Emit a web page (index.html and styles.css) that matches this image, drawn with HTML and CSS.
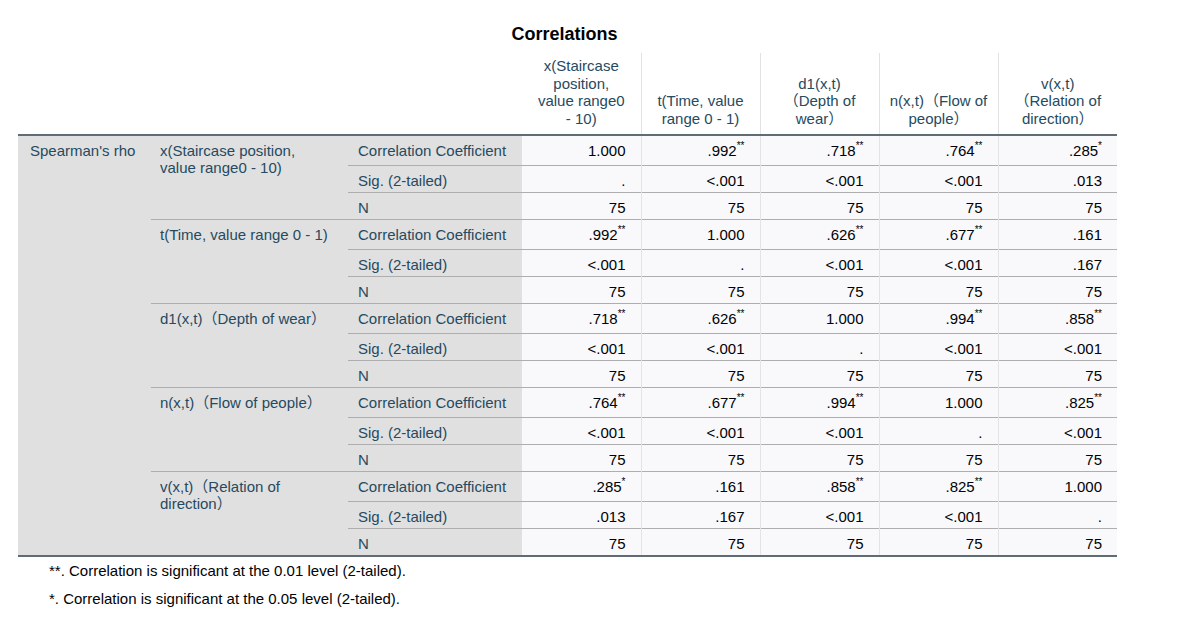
FILE: index.html
```html
<!DOCTYPE html>
<html lang="en">
<head>
<meta charset="utf-8">
<title>Correlations</title>
<link rel="stylesheet" href="styles.css">
</head>
<body>
<div class="page">
  <div class="title">Correlations</div>
  <table class="corr">
    <colgroup>
      <col class="c-a"><col class="c-b"><col class="c-c">
      <col class="c-d"><col class="c-d"><col class="c-d"><col class="c-d"><col class="c-d">
    </colgroup>
    <thead>
      <tr>
        <th class="blank" colspan="3"></th>
        <th>x(Staircase<br>position,<br>value range0<br>- 10)</th>
        <th>t(Time, value<br>range 0 - 1)</th>
        <th>d1(x,t)<br>（Depth of<br>wear）</th>
        <th>n(x,t)（Flow of<br>people）</th>
        <th>v(x,t)<br>（Relation of<br>direction）</th>
      </tr>
    </thead>
    <tbody>
      <tr class="coef">
        <th class="g" rowspan="15">Spearman's rho</th>
        <th class="v" rowspan="3">x(Staircase position,<br>value range0 - 10)</th>
        <th class="s">Correlation Coefficient</th>
        <td>1.000</td><td>.992<sup>**</sup></td><td>.718<sup>**</sup></td><td>.764<sup>**</sup></td><td>.285<sup>*</sup></td>
      </tr>
      <tr class="sig">
        <th class="s">Sig. (2-tailed)</th>
        <td>.</td><td>&lt;.001</td><td>&lt;.001</td><td>&lt;.001</td><td>.013</td>
      </tr>
      <tr class="n">
        <th class="s">N</th>
        <td>75</td><td>75</td><td>75</td><td>75</td><td>75</td>
      </tr>

      <tr class="coef">
        <th class="v" rowspan="3">t(Time, value range 0 - 1)</th>
        <th class="s">Correlation Coefficient</th>
        <td>.992<sup>**</sup></td><td>1.000</td><td>.626<sup>**</sup></td><td>.677<sup>**</sup></td><td>.161</td>
      </tr>
      <tr class="sig">
        <th class="s">Sig. (2-tailed)</th>
        <td>&lt;.001</td><td>.</td><td>&lt;.001</td><td>&lt;.001</td><td>.167</td>
      </tr>
      <tr class="n">
        <th class="s">N</th>
        <td>75</td><td>75</td><td>75</td><td>75</td><td>75</td>
      </tr>

      <tr class="coef">
        <th class="v" rowspan="3">d1(x,t)（Depth of wear）</th>
        <th class="s">Correlation Coefficient</th>
        <td>.718<sup>**</sup></td><td>.626<sup>**</sup></td><td>1.000</td><td>.994<sup>**</sup></td><td>.858<sup>**</sup></td>
      </tr>
      <tr class="sig">
        <th class="s">Sig. (2-tailed)</th>
        <td>&lt;.001</td><td>&lt;.001</td><td>.</td><td>&lt;.001</td><td>&lt;.001</td>
      </tr>
      <tr class="n">
        <th class="s">N</th>
        <td>75</td><td>75</td><td>75</td><td>75</td><td>75</td>
      </tr>

      <tr class="coef">
        <th class="v" rowspan="3">n(x,t)（Flow of people）</th>
        <th class="s">Correlation Coefficient</th>
        <td>.764<sup>**</sup></td><td>.677<sup>**</sup></td><td>.994<sup>**</sup></td><td>1.000</td><td>.825<sup>**</sup></td>
      </tr>
      <tr class="sig">
        <th class="s">Sig. (2-tailed)</th>
        <td>&lt;.001</td><td>&lt;.001</td><td>&lt;.001</td><td>.</td><td>&lt;.001</td>
      </tr>
      <tr class="n">
        <th class="s">N</th>
        <td>75</td><td>75</td><td>75</td><td>75</td><td>75</td>
      </tr>

      <tr class="coef">
        <th class="v" rowspan="3">v(x,t)（Relation of<br>direction）</th>
        <th class="s">Correlation Coefficient</th>
        <td>.285<sup>*</sup></td><td>.161</td><td>.858<sup>**</sup></td><td>.825<sup>**</sup></td><td>1.000</td>
      </tr>
      <tr class="sig">
        <th class="s">Sig. (2-tailed)</th>
        <td>.013</td><td>.167</td><td>&lt;.001</td><td>&lt;.001</td><td>.</td>
      </tr>
      <tr class="n">
        <th class="s">N</th>
        <td>75</td><td>75</td><td>75</td><td>75</td><td>75</td>
      </tr>
    </tbody>
  </table>
  <div class="notes">
    <p>**. Correlation is significant at the 0.01 level (2-tailed).</p>
    <p>*. Correlation is significant at the 0.05 level (2-tailed).</p>
  </div>
</div>
</body>
</html>
```

FILE: styles.css
```css
html, body {
  margin: 0;
  padding: 0;
  background: #ffffff;
}

body {
  font-family: "Liberation Sans", Arial, "Noto Sans CJK SC", sans-serif;
  font-size: 15px;
  color: #010205;
}

.page {
  padding: 24px 0 0 18px;
}

.title {
  width: 1093px;
  text-align: center;
  font-weight: bold;
  font-size: 18px;
  line-height: 21px;
  margin-bottom: 8px;
  color: #010205;
}

.corr {
  width: 1099px;
  table-layout: fixed;
  border-collapse: collapse;
  font-size: 15px;
  line-height: 17px;
}

.c-a { width: 133px; }
.c-b { width: 197px; }
.c-c { width: 174px; }
.c-d { width: 119px; }

.corr thead th {
  font-weight: normal;
  color: #264a60;
  text-align: center;
  vertical-align: bottom;
  padding: 4px 6px 7px;
  line-height: 17.5px;
  border-left: 1px solid #e2e2e2;
}

.corr thead th.blank,
.corr thead th.blank + th {
  border-left: none;
}

.corr tbody {
  border-top: 2px solid #5f6c75;
  border-bottom: 2px solid #5f6c75;
}

.corr tbody th {
  background: #e0e0e0;
  color: #264a60;
  font-weight: normal;
  text-align: left;
  vertical-align: top;
}

.corr tbody th.g {
  padding: 6px 0 0 12px;
}

.corr tbody th.v {
  padding: 6px 6px 0 9px;
  border-top: 1px solid #aeaeae;
}

.corr tbody th.s {
  padding: 6px 6px 0 10px;
  border-top: 1px solid #aeaeae;
  white-space: nowrap;
}

.corr tbody td {
  background: #f9f9fb;
  text-align: right;
  vertical-align: top;
  padding: 6px 15px 0 6px;
  border-top: 1px solid #aeaeae;
  white-space: nowrap;
}

.corr tbody td + td {
  border-left: 1px solid #e4e4e6;
}

.corr tr.coef th.s,
.corr tr.coef td {
  height: 23px;
}

.corr tr.sig th.s,
.corr tr.sig td,
.corr tr.n th.s,
.corr tr.n td {
  height: 20px;
}

.corr sup {
  font-size: 10px;
  line-height: 1;
  vertical-align: top;
  position: relative;
  top: -1px;
}

.notes {
  padding: 0 0 0 31px;
}

.notes p {
  margin: 0;
  line-height: 28px;
  font-size: 15px;
  color: #010205;
}
```
